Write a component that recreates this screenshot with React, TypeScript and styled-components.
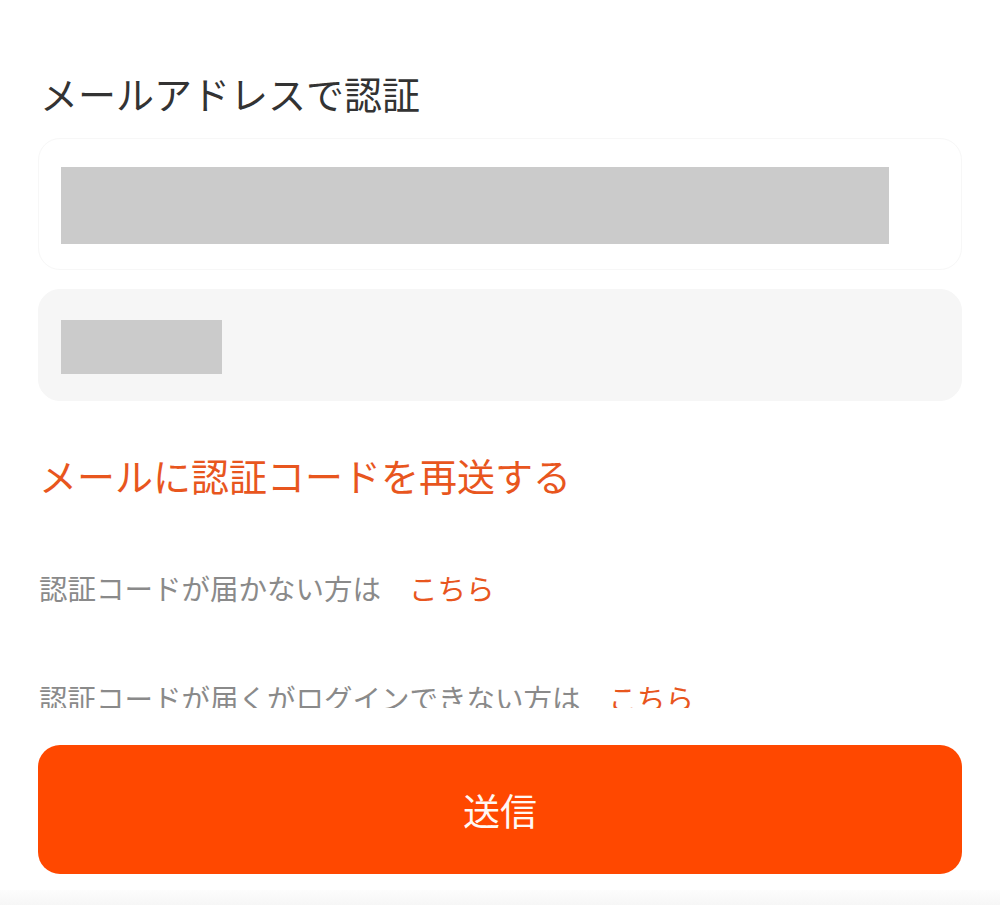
import React from "react";
import styled, { createGlobalStyle } from "styled-components";

const Global = createGlobalStyle`
  html, body { margin: 0; padding: 0; background: #ffffff; }
  body {
    font-family: "Noto Sans CJK JP", "Noto Sans", sans-serif;
    -webkit-font-smoothing: antialiased;
  }
`;

const Page = styled.div`
  width: 1000px;
  height: 905px;
  display: flex;
  flex-direction: column;
  background: #ffffff;
  overflow: hidden;
`;

const ScrollArea = styled.div`
  height: 708px;
  flex-shrink: 0;
  overflow: hidden;
  padding: 68px 38px 0;
  box-sizing: border-box;
  display: flex;
  flex-direction: column;
  & > * { flex-shrink: 0; }
`;

const Title = styled.h1`
  margin: 0;
  font-size: 38px;
  line-height: 50px;
  font-weight: 400;
  color: #333333;
  padding-left: 2px;
`;

const Field = styled.div<{ $filled?: boolean; $height: number; $top: number }>`
  margin-top: ${(p) => p.$top}px;
  height: ${(p) => p.$height}px;
  box-sizing: border-box;
  border-radius: 22px;
  background: ${(p) => (p.$filled ? "#f6f6f6" : "#ffffff")};
  border: 1px solid ${(p) => (p.$filled ? "#f6f6f6" : "#f7f7f7")};
  display: flex;
  align-items: flex-start;
  padding-left: 22px;
`;

const Redacted = styled.div<{ $w: number; $h: number; $top: number }>`
  width: ${(p) => p.$w}px;
  height: ${(p) => p.$h}px;
  margin-top: ${(p) => p.$top}px;
  background: #cbcbcb;
`;

const ResendLink = styled.a`
  margin-top: 49px;
  font-size: 38px;
  line-height: 50px;
  color: #e8561e;
  text-decoration: none;
  padding-left: 1px;
  cursor: pointer;
`;

const HelpRow = styled.div<{ $top: number }>`
  margin-top: ${(p) => p.$top}px;
  display: flex;
  align-items: center;
  gap: 28px;
  font-size: 28.5px;
  line-height: 40px;
  color: #8a8a8a;
  white-space: nowrap;
  padding-left: 1px;
`;

const HereLink = styled.a`
  color: #e8561e;
  text-decoration: none;
  cursor: pointer;
`;

const SubmitButton = styled.button`
  flex-shrink: 0;
  margin: 37px 38px 0;
  height: 129px;
  border: none;
  border-radius: 22px;
  background: #ff4800;
  color: #fff8f4;
  font-family: "Noto Sans CJK JP", "Noto Sans", sans-serif;
  font-size: 37px;
  cursor: pointer;
`;

const BottomBar = styled.div`
  margin-top: 16px;
  flex: 1;
  background: linear-gradient(#fdfdfd, #f6f6f6);
`;

export default function App() {
  return (
    <>
      <Global />
      <Page>
        <ScrollArea>
          <Title>メールアドレスで認証</Title>
          <Field $top={20} $height={132}>
            <Redacted $w={828} $h={77} $top={28} />
          </Field>
          <Field $filled $top={19} $height={112}>
            <Redacted $w={161} $h={54} $top={30} />
          </Field>
          <ResendLink>メールに認証コードを再送する</ResendLink>
          <HelpRow $top={68}>
            <span>認証コードが届かない方は</span>
            <HereLink>こちら</HereLink>
          </HelpRow>
          <HelpRow $top={70}>
            <span>認証コードが届くがログインできない方は</span>
            <HereLink>こちら</HereLink>
          </HelpRow>
        </ScrollArea>
        <SubmitButton>送信</SubmitButton>
        <BottomBar />
      </Page>
    </>
  );
}
